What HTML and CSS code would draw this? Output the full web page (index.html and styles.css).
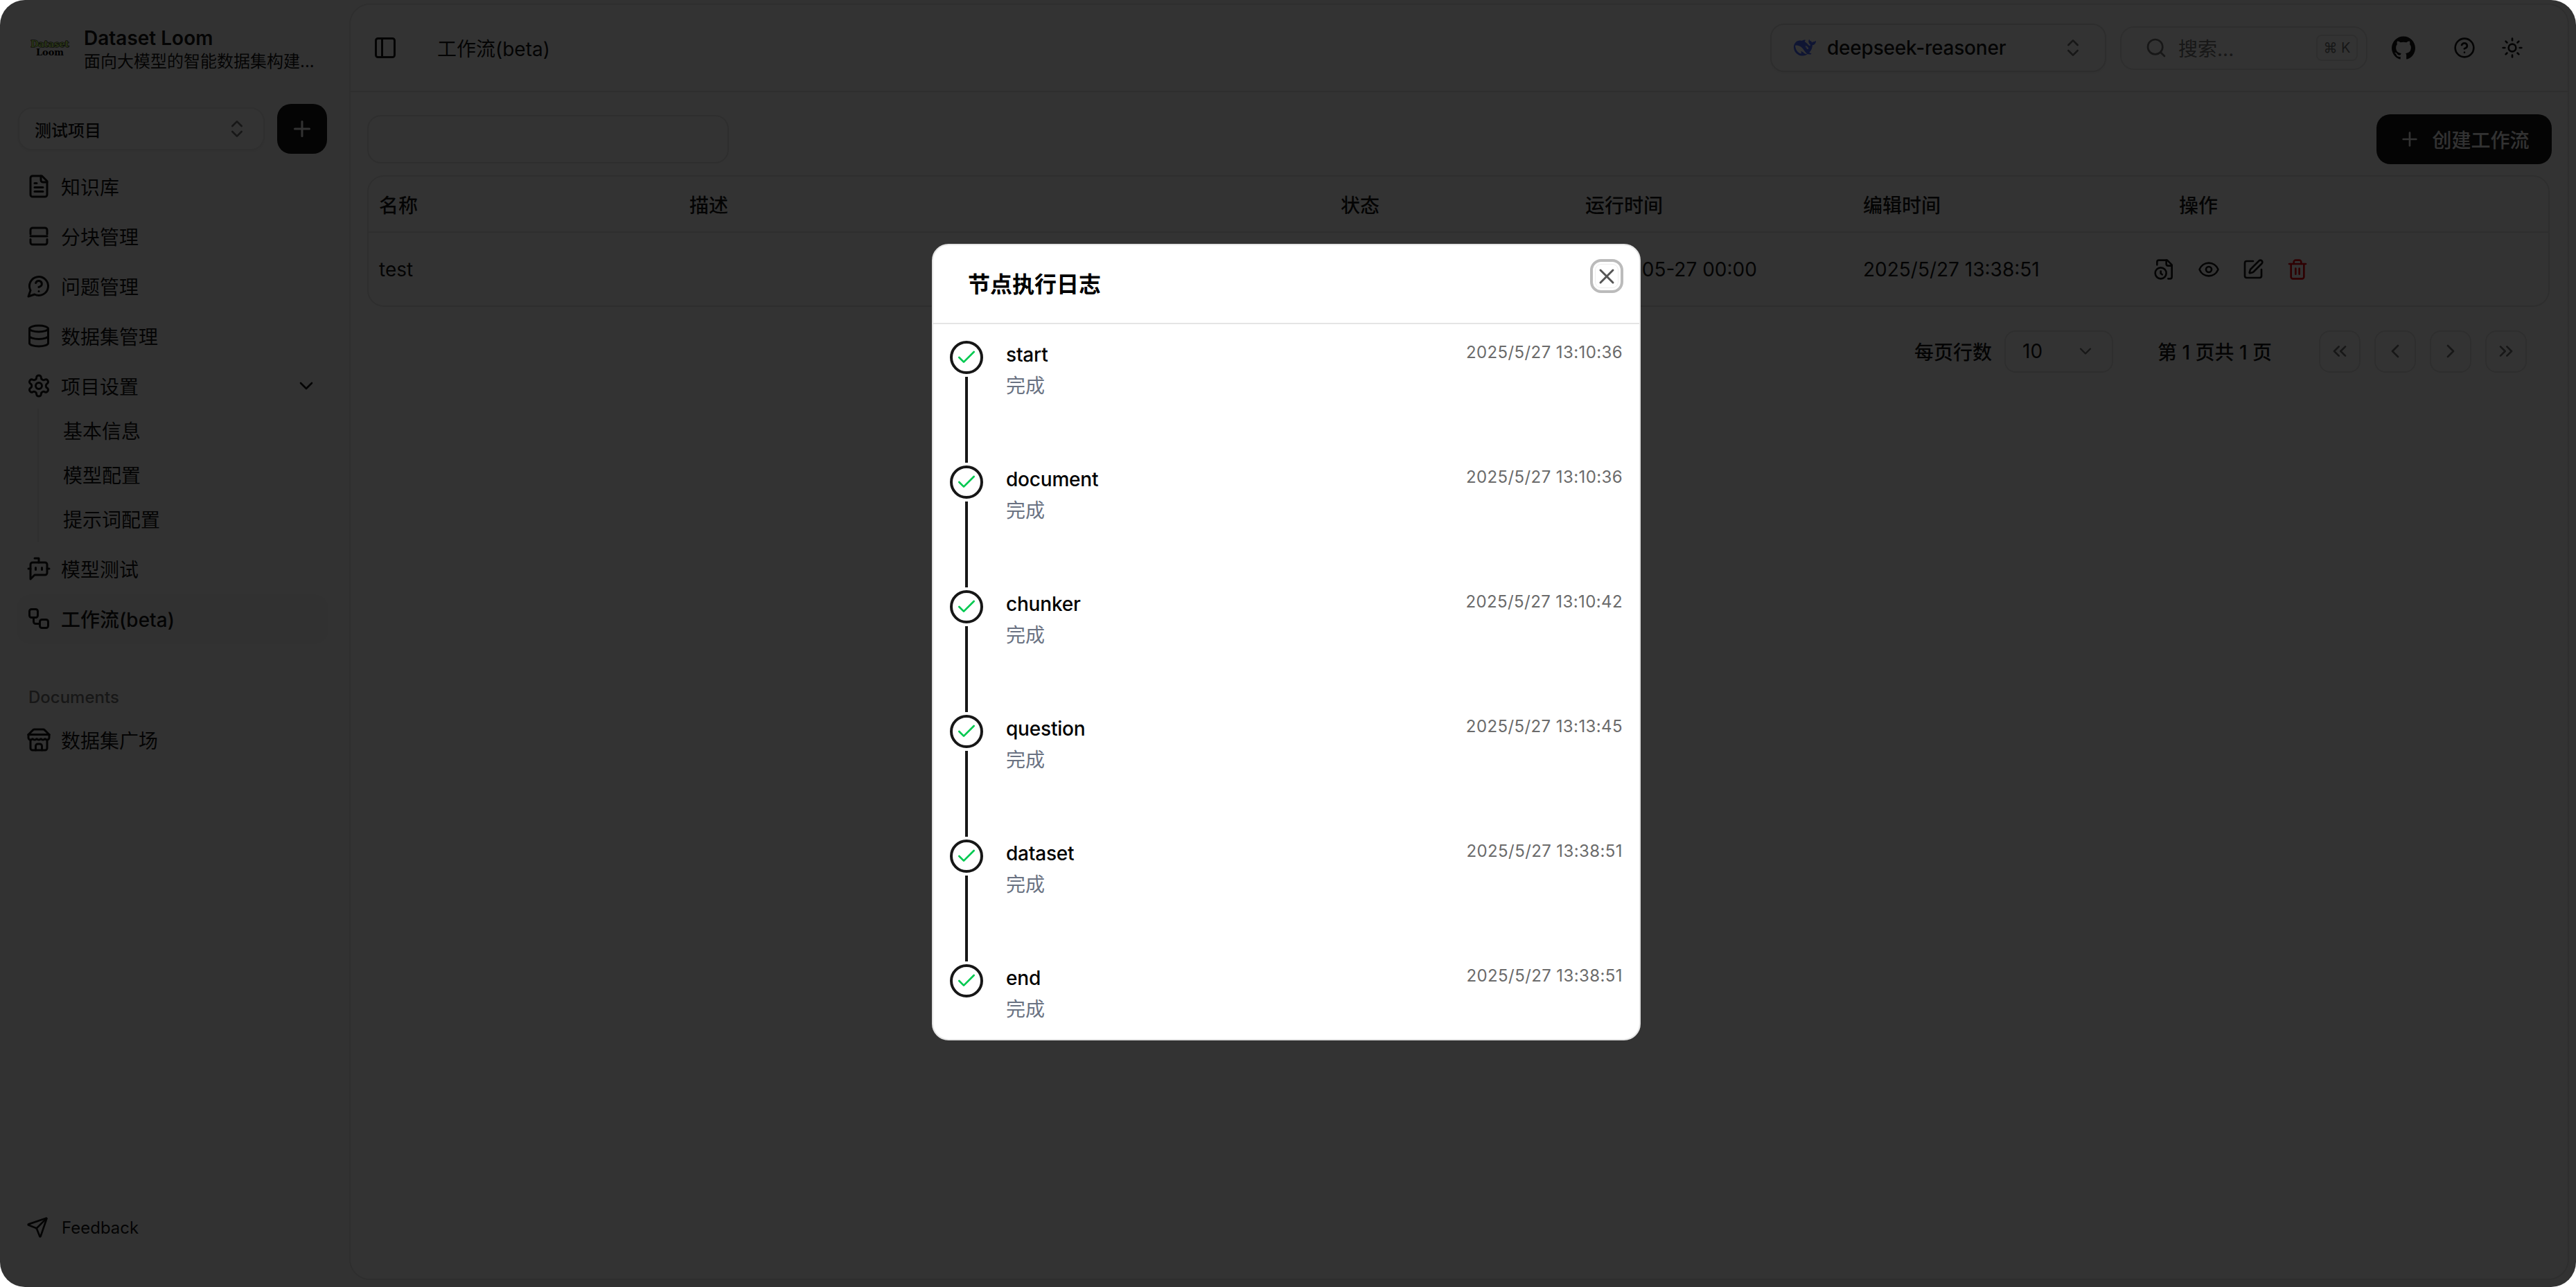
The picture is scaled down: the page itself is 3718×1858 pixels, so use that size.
FILE: index.html
```html
<!DOCTYPE html>
<html lang="zh-CN">
<head>
    <meta charset="UTF-8">
    <meta name="viewport" content="width=device-width, initial-scale=1.0">
    <title>Dataset Loom</title>
    <link rel="stylesheet" href="styles.css">
</head>
<body>

    <!-- Icon sprite -->
    <svg class="sprite" xmlns="http://www.w3.org/2000/svg">
        <symbol id="i-file" viewBox="0 0 24 24"><path d="M15 2H6a2 2 0 0 0-2 2v16a2 2 0 0 0 2 2h12a2 2 0 0 0 2-2V7Z"/><path d="M14 2v4a2 2 0 0 0 2 2h4"/><path d="M10 9H8"/><path d="M16 13H8"/><path d="M16 17H8"/></symbol>
        <symbol id="i-chunk" viewBox="0 0 24 24"><path d="M4 10V6a2 2 0 0 1 2-2h12a2 2 0 0 1 2 2v4"/><path d="M4 12h16"/><path d="M4 15v3a2 2 0 0 0 2 2h12a2 2 0 0 0 2-2v-3"/></symbol>
        <symbol id="i-question" viewBox="0 0 24 24"><path d="M7.9 20A9 9 0 1 0 4 16.1L2 22Z"/><path d="M9.09 9a3 3 0 0 1 5.83 1c0 2-3 3-3 3"/><path d="M12 17h.01"/></symbol>
        <symbol id="i-database" viewBox="0 0 24 24"><ellipse cx="12" cy="5" rx="9" ry="3"/><path d="M3 5V19A9 3 0 0 0 21 19V5"/><path d="M3 12A9 3 0 0 0 21 12"/></symbol>
        <symbol id="i-settings" viewBox="0 0 24 24"><path d="M12.22 2h-.44a2 2 0 0 0-2 2v.18a2 2 0 0 1-1 1.73l-.43.25a2 2 0 0 1-2 0l-.15-.08a2 2 0 0 0-2.73.73l-.22.38a2 2 0 0 0 .73 2.73l.15.1a2 2 0 0 1 1 1.72v.51a2 2 0 0 1-1 1.74l-.15.09a2 2 0 0 0-.73 2.73l.22.38a2 2 0 0 0 2.73.73l.15-.08a2 2 0 0 1 2 0l.43.25a2 2 0 0 1 1 1.73V20a2 2 0 0 0 2 2h.44a2 2 0 0 0 2-2v-.18a2 2 0 0 1 1-1.73l.43-.25a2 2 0 0 1 2 0l.15.08a2 2 0 0 0 2.73-.73l.22-.39a2 2 0 0 0-.73-2.73l-.15-.08a2 2 0 0 1-1-1.74v-.5a2 2 0 0 1 1-1.74l.15-.09a2 2 0 0 0 .73-2.73l-.22-.38a2 2 0 0 0-2.73-.73l-.15.08a2 2 0 0 1-2 0l-.43-.25a2 2 0 0 1-1-1.73V4a2 2 0 0 0-2-2z"/><circle cx="12" cy="12" r="3"/></symbol>
        <symbol id="i-bot" viewBox="0 0 24 24"><path d="M12 6V2H8"/><path d="m8 18-4 4V8a2 2 0 0 1 2-2h12a2 2 0 0 1 2 2v8a2 2 0 0 1-2 2Z"/><path d="M2 12h2"/><path d="M9 11v2"/><path d="M15 11v2"/><path d="M20 12h2"/></symbol>
        <symbol id="i-workflow" viewBox="0 0 24 24"><rect x="3" y="3" width="8" height="8" rx="2"/><path d="M7 11v4a2 2 0 0 0 2 2h4"/><rect x="13" y="13" width="8" height="8" rx="2"/></symbol>
        <symbol id="i-store" viewBox="0 0 24 24"><path d="m2 7 4.41-4.41A2 2 0 0 1 7.83 2h8.34a2 2 0 0 1 1.42.59L22 7"/><path d="M4 12v8a2 2 0 0 0 2 2h12a2 2 0 0 0 2-2v-8"/><path d="M15 22v-4a2 2 0 0 0-2-2h-2a2 2 0 0 0-2 2v4"/><path d="M2 7h20"/><path d="M22 7v3a2 2 0 0 1-2 2a2.7 2.7 0 0 1-1.59-.63.7.7 0 0 0-.82 0A2.7 2.7 0 0 1 16 12a2.7 2.7 0 0 1-1.59-.63.7.7 0 0 0-.82 0A2.7 2.7 0 0 1 12 12a2.7 2.7 0 0 1-1.59-.63.7.7 0 0 0-.82 0A2.7 2.7 0 0 1 8 12a2.7 2.7 0 0 1-1.59-.63.7.7 0 0 0-.82 0A2.7 2.7 0 0 1 4 12a2 2 0 0 1-2-2V7"/></symbol>
        <symbol id="i-send" viewBox="0 0 24 24"><path d="M14.536 21.686a.5.5 0 0 0 .937-.024l6.5-19a.496.496 0 0 0-.635-.635l-19 6.5a.5.5 0 0 0-.024.937l7.93 3.18a2 2 0 0 1 1.112 1.11z"/><path d="m21.854 2.147-10.94 10.939"/></symbol>
        <symbol id="i-updown" viewBox="0 0 24 24"><path d="m7 15 5 5 5-5"/><path d="m7 9 5-5 5 5"/></symbol>
        <symbol id="i-plus" viewBox="0 0 24 24"><path d="M5 12h14"/><path d="M12 5v14"/></symbol>
        <symbol id="i-down" viewBox="0 0 24 24"><path d="m6 9 6 6 6-6"/></symbol>
        <symbol id="i-panel" viewBox="0 0 24 24"><rect x="3" y="3" width="18" height="18" rx="2"/><path d="M9 3v18"/></symbol>
        <symbol id="i-search" viewBox="0 0 24 24"><path d="m21 21-4.34-4.34"/><circle cx="11" cy="11" r="8"/></symbol>
        <symbol id="i-help" viewBox="0 0 24 24"><circle cx="12" cy="12" r="10"/><path d="M9.09 9a3 3 0 0 1 5.83 1c0 2-3 3-3 3"/><path d="M12 17h.01"/></symbol>
        <symbol id="i-sun" viewBox="0 0 24 24"><circle cx="12" cy="12" r="4"/><path d="M12 2v2"/><path d="M12 20v2"/><path d="m4.93 4.93 1.41 1.41"/><path d="m17.66 17.66 1.41 1.41"/><path d="M2 12h2"/><path d="M20 12h2"/><path d="m6.34 17.66-1.41 1.41"/><path d="m19.07 4.93-1.41 1.41"/></symbol>
        <symbol id="i-fileclock" viewBox="0 0 24 24"><path d="M16 22h2a2 2 0 0 0 2-2V7l-5-5H6a2 2 0 0 0-2 2v3"/><path d="M14 2v4a2 2 0 0 0 2 2h4"/><circle cx="8" cy="16" r="6"/><path d="M9.5 17.5 8 16.25V14"/></symbol>
        <symbol id="i-eye" viewBox="0 0 24 24"><path d="M2.062 12.348a1 1 0 0 1 0-.696 10.75 10.75 0 0 1 19.876 0 1 1 0 0 1 0 .696 10.75 10.75 0 0 1-19.876 0"/><circle cx="12" cy="12" r="3"/></symbol>
        <symbol id="i-pen" viewBox="0 0 24 24"><path d="M12 3H5a2 2 0 0 0-2 2v14a2 2 0 0 0 2 2h14a2 2 0 0 0 2-2v-7"/><path d="M18.375 2.625a1 1 0 0 1 3 3l-9.013 9.014a2 2 0 0 1-.853.505l-2.873.84a.5.5 0 0 1-.62-.62l.84-2.873a2 2 0 0 1 .506-.852z"/></symbol>
        <symbol id="i-trash" viewBox="0 0 24 24"><path d="M3 6h18"/><path d="M19 6v14c0 1-1 2-2 2H7c-1 0-2-1-2-2V6"/><path d="M8 6V4c0-1 1-2 2-2h4c1 0 2 1 2 2v2"/><path d="M10 11v6"/><path d="M14 11v6"/></symbol>
        <symbol id="i-first" viewBox="0 0 24 24"><path d="m11 17-5-5 5-5"/><path d="m18 17-5-5 5-5"/></symbol>
        <symbol id="i-prev" viewBox="0 0 24 24"><path d="m15 18-6-6 6-6"/></symbol>
        <symbol id="i-next" viewBox="0 0 24 24"><path d="m9 18 6-6-6-6"/></symbol>
        <symbol id="i-last" viewBox="0 0 24 24"><path d="m6 17 5-5-5-5"/><path d="m13 17 5-5-5-5"/></symbol>
        <symbol id="i-x" viewBox="0 0 24 24"><path d="M18 6 6 18"/><path d="m6 6 12 12"/></symbol>
        <symbol id="i-check" viewBox="0 0 24 24"><path d="M20 6 9 17l-5-5"/></symbol>
    </svg>

    <div class="app">

        <!-- Sidebar -->
        <aside class="sidebar">
            <div class="brand">
                <div class="brand-logo"><span class="logo-top">Dataset</span><span class="logo-bottom">Loom</span></div>
                <div class="brand-text">
                    <div class="brand-name">Dataset Loom</div>
                    <div class="brand-desc">面向大模型的智能数据集构建...</div>
                </div>
            </div>

            <div class="project-row">
                <div class="project-select">
                    <span>测试项目</span>
                    <svg class="icon icon-sm muted"><use href="#i-updown"/></svg>
                </div>
                <button class="add-project"><svg class="icon"><use href="#i-plus"/></svg></button>
            </div>

            <nav class="nav">
                <a class="nav-item"><svg class="icon"><use href="#i-file"/></svg>知识库</a>
                <a class="nav-item"><svg class="icon"><use href="#i-chunk"/></svg>分块管理</a>
                <a class="nav-item"><svg class="icon"><use href="#i-question"/></svg>问题管理</a>
                <a class="nav-item"><svg class="icon"><use href="#i-database"/></svg>数据集管理</a>
                <a class="nav-item"><svg class="icon"><use href="#i-settings"/></svg>项目设置<svg class="icon nav-caret"><use href="#i-down"/></svg></a>
                <div class="sub-nav">
                    <a class="sub-item">基本信息</a>
                    <a class="sub-item">模型配置</a>
                    <a class="sub-item">提示词配置</a>
                </div>
                <a class="nav-item"><svg class="icon"><use href="#i-bot"/></svg>模型测试</a>
                <a class="nav-item active"><svg class="icon"><use href="#i-workflow"/></svg>工作流(beta)</a>
            </nav>

            <div class="nav-label">Documents</div>
            <a class="nav-item"><svg class="icon"><use href="#i-store"/></svg>数据集广场</a>

            <a class="feedback"><svg class="icon icon-feedback"><use href="#i-send"/></svg>Feedback</a>
        </aside>

        <!-- Main panel -->
        <main class="panel">
            <header class="topbar">
                <svg class="icon"><use href="#i-panel"/></svg>
                <span class="page-title">工作流(beta)</span>

                <div class="model-select">
                    <svg class="whale" viewBox="0 0 24 24"><path fill-rule="evenodd" d="M23.748 4.482c-.254-.124-.364.113-.512.234-.051.039-.094.09-.137.136-.372.397-.806.657-1.373.626-.829-.046-1.537.214-2.163.848-.133-.782-.575-1.248-1.247-1.548-.352-.156-.708-.311-.955-.65-.172-.241-.219-.51-.305-.774-.055-.16-.11-.323-.293-.35-.2-.031-.278.136-.356.276-.313.572-.434 1.202-.422 1.84.027 1.436.633 2.58 1.838 3.393.137.093.172.187.129.323-.082.28-.18.552-.266.833-.055.179-.137.217-.329.14a5.526 5.526 0 01-1.736-1.18c-.857-.828-1.631-1.742-2.597-2.458a11.365 11.365 0 00-.689-.471c-.985-.957.13-1.743.388-1.836.27-.098.093-.432-.779-.428-.872.004-1.67.295-2.687.684a3.055 3.055 0 01-.465.137 9.597 9.597 0 00-2.883-.102c-1.885.21-3.39 1.102-4.497 2.623C.082 8.606-.231 10.684.152 12.85c.403 2.284 1.569 4.175 3.36 5.653 1.858 1.533 3.997 2.284 6.438 2.14 1.482-.085 3.133-.284 4.994-1.860.47.234.962.327 1.78.397.63.059 1.236-.03 1.705-.128.735-.156.684-.837.419-.961-2.155-1.004-1.682-.595-2.113-.926 1.096-1.296 2.746-2.642 3.392-7.003.05-.347.007-.565 0-.845-.004-.17.035-.237.23-.256a4.173 4.173 0 001.545-.475c1.396-.763 1.960-2.015 2.093-3.517.02-.23-.004-.467-.247-.588zM11.581 18c-2.089-1.642-3.102-2.183-3.52-2.160-.392.024-.321.471-.235.763.09.288.207.486.371.739.114.167.192.416-.113.603-.673.416-1.842-.14-1.897-.167-1.361-.802-2.500-1.860-3.301-3.307-.774-1.393-1.224-2.887-1.298-4.482-.02-.386.093-.522.477-.592a4.696 4.696 0 011.529-.039c2.132.312 3.946 1.265 5.468 2.774.868.86 1.525 1.887 2.202 2.891.72 1.066 1.494 2.082 2.48 2.914.348.292.625.514.891.677-.802.09-2.14.11-3.054-.614zm1-6.44a.306.306 0 01.415-.287.302.302 0 01.2.288.306.306 0 01-.31.307.303.303 0 01-.304-.308zm3.110 1.596c-.2.081-.399.151-.59.16a1.245 1.245 0 01-.798-.254c-.274-.23-.47-.358-.552-.758a1.730 1.730 0 01.016-.588c.07-.327-.008-.537-.239-.727-.187-.156-.426-.199-.688-.199a.559.559 0 01-.254-.078c-.11-.054-.2-.19-.114-.358.028-.054.16-.186.192-.21.356-.202.767-.136 1.146.016.352.144.618.408 1.001.782.391.451.462.576.685.914.176.265.336.537.445.848.067.195-.019.354-.25.452z"/></svg>
                    <span class="model-name">deepseek-reasoner</span>
                    <svg class="icon icon-sm muted model-caret"><use href="#i-updown"/></svg>
                </div>

                <div class="search-box">
                    <svg class="icon muted"><use href="#i-search"/></svg>
                    <span class="search-text">搜索...</span>
                    <kbd class="kbd">⌘ K</kbd>
                </div>

                <svg class="github" viewBox="0 0 24 24"><path d="M12 .297c-6.630 0-12 5.373-12 12 0 5.303 3.438 9.800 8.205 11.385.6.113.82-.258.82-.577 0-.285-.01-1.040-.015-2.040-3.338.724-4.042-1.610-4.042-1.610C4.422 18.070 3.633 17.700 3.633 17.700c-1.087-.744.084-.729.084-.729 1.205.084 1.838 1.236 1.838 1.236 1.070 1.835 2.809 1.305 3.495.998.108-.776.417-1.305.76-1.605-2.665-.3-5.466-1.332-5.466-5.930 0-1.310.465-2.380 1.235-3.220-.135-.303-.54-1.523.105-3.176 0 0 1.005-.322 3.300 1.230.96-.267 1.980-.399 3-.405 1.020.006 2.040.138 3 .405 2.280-1.552 3.285-1.230 3.285-1.230.645 1.653.24 2.873.12 3.176.765.84 1.230 1.910 1.230 3.220 0 4.610-2.805 5.625-5.475 5.920.42.36.81 1.096.81 2.220 0 1.606-.015 2.896-.015 3.286 0 .315.21.69.825.57C20.565 22.092 24 17.592 24 12.297c0-6.627-5.373-12-12-12"/></svg>
                <svg class="icon top-help"><use href="#i-help"/></svg>
                <svg class="icon top-sun"><use href="#i-sun"/></svg>
            </header>

            <section class="content">
                <div class="toolbar">
                    <div class="filter-input"></div>
                    <button class="create-btn"><svg class="icon"><use href="#i-plus"/></svg>创建工作流</button>
                </div>

                <div class="table">
                    <div class="row row-head">
                        <div>名称</div>
                        <div>描述</div>
                        <div>状态</div>
                        <div>运行时间</div>
                        <div>编辑时间</div>
                        <div class="head-actions">操作</div>
                    </div>
                    <div class="row row-body">
                        <div>test</div>
                        <div></div>
                        <div></div>
                        <div>2025-05-27 00:00</div>
                        <div>2025/5/27 13:38:51</div>
                        <div class="actions">
                            <svg class="icon"><use href="#i-fileclock"/></svg>
                            <svg class="icon"><use href="#i-eye"/></svg>
                            <svg class="icon"><use href="#i-pen"/></svg>
                            <svg class="icon danger"><use href="#i-trash"/></svg>
                        </div>
                    </div>
                </div>

                <div class="pager">
                    <span class="pager-label">每页行数</span>
                    <div class="pager-select">10<svg class="icon pager-caret muted"><use href="#i-down"/></svg></div>
                    <span class="pager-info">第 1 页共 1 页</span>
                    <div class="pager-buttons">
                        <button class="page-btn"><svg class="icon icon-sm"><use href="#i-first"/></svg></button>
                        <button class="page-btn"><svg class="icon icon-sm"><use href="#i-prev"/></svg></button>
                        <button class="page-btn"><svg class="icon icon-sm"><use href="#i-next"/></svg></button>
                        <button class="page-btn"><svg class="icon icon-sm"><use href="#i-last"/></svg></button>
                    </div>
                </div>
            </section>
        </main>

        <!-- Dialog -->
        <div class="overlay">
            <div class="modal">
                <div class="modal-head">
                    <h2 class="modal-title">节点执行日志</h2>
                    <button class="modal-close"><svg class="icon"><use href="#i-x"/></svg></button>
                </div>
                <div class="timeline" id="timeline">
                    <div class="step">
                        <div class="step-mark"><span class="step-dot"><svg class="icon"><use href="#i-check"/></svg></span><span class="step-line"></span></div>
                        <div class="step-body"><div class="step-name">start</div><div class="step-status">完成</div></div>
                        <time class="step-time">2025/5/27 13:10:36</time>
                    </div>
                    <div class="step">
                        <div class="step-mark"><span class="step-dot"><svg class="icon"><use href="#i-check"/></svg></span><span class="step-line"></span></div>
                        <div class="step-body"><div class="step-name">document</div><div class="step-status">完成</div></div>
                        <time class="step-time">2025/5/27 13:10:36</time>
                    </div>
                    <div class="step">
                        <div class="step-mark"><span class="step-dot"><svg class="icon"><use href="#i-check"/></svg></span><span class="step-line"></span></div>
                        <div class="step-body"><div class="step-name">chunker</div><div class="step-status">完成</div></div>
                        <time class="step-time">2025/5/27 13:10:42</time>
                    </div>
                    <div class="step">
                        <div class="step-mark"><span class="step-dot"><svg class="icon"><use href="#i-check"/></svg></span><span class="step-line"></span></div>
                        <div class="step-body"><div class="step-name">question</div><div class="step-status">完成</div></div>
                        <time class="step-time">2025/5/27 13:13:45</time>
                    </div>
                    <div class="step">
                        <div class="step-mark"><span class="step-dot"><svg class="icon"><use href="#i-check"/></svg></span><span class="step-line"></span></div>
                        <div class="step-body"><div class="step-name">dataset</div><div class="step-status">完成</div></div>
                        <time class="step-time">2025/5/27 13:38:51</time>
                    </div>
                    <div class="step step-last">
                        <div class="step-mark"><span class="step-dot"><svg class="icon"><use href="#i-check"/></svg></span></div>
                        <div class="step-body"><div class="step-name">end</div><div class="step-status">完成</div></div>
                        <time class="step-time">2025/5/27 13:38:51</time>
                    </div>
                </div>
            </div>
        </div>

    </div>

</body>
</html>
```

FILE: styles.css
```css
* {
    box-sizing: border-box;
}
html, body {
    height: 100%;
}
body {
    margin: 0;
    background-color: #fff;
    color: #171717;
    font-family: Inter, "Noto Sans CJK SC", "DejaVu Sans", sans-serif;
    font-size: 28px;
}
button {
    font-family: inherit;
    cursor: pointer;
}
.sprite {
    display: none;
}
.icon {
    width: 36px;
    height: 36px;
    flex: none;
    fill: none;
    stroke: currentColor;
    stroke-width: 2;
    stroke-linecap: round;
    stroke-linejoin: round;
}
.icon-sm {
    width: 32px;
    height: 32px;
}
.muted {
    color: #737373;
}
.app {
    position: relative;
    display: flex;
    height: 100vh;
    border-radius: 36px;
    overflow: hidden;
    background-color: #fafafa;
}

/* Sidebar */
.sidebar {
    width: 504px;
    flex: none;
    display: flex;
    flex-direction: column;
}
.brand {
    height: 150px;
    padding: 0 0 6px 41px;
    display: flex;
    align-items: center;
}
.brand-logo {
    width: 62px;
    margin: 0 18px 4px 0;
    display: flex;
    flex-direction: column;
    align-items: center;
    font-family: "DejaVu Serif", serif;
    font-weight: 700;
    line-height: 12px;
}
.logo-top {
    font-size: 13px;
    color: #c8ff70;
    -webkit-text-stroke: 1px #000;
    paint-order: stroke fill;
}
.logo-bottom {
    font-size: 13px;
    color: #000;
}
.brand-name {
    font-weight: 600;
    line-height: 34px;
}
.brand-desc {
    font-size: 24px;
    line-height: 34px;
}
.project-row {
    height: 72px;
    padding-left: 26px;
    display: flex;
    align-items: center;
    gap: 18px;
}
.project-select {
    width: 356px;
    height: 62px;
    padding: 0 22px;
    display: flex;
    align-items: center;
    justify-content: space-between;
    font-size: 24px;
    font-weight: 500;
    background-color: #fff;
    border: 2px solid #e8e8e8;
    border-radius: 20px;
    box-shadow: 0 2px 4px rgba(0, 0, 0, 0.05);
}
.add-project {
    width: 72px;
    height: 72px;
    padding: 0;
    border: none;
    border-radius: 20px;
    background-color: #171717;
    color: #fafafa;
    display: flex;
    align-items: center;
    justify-content: center;
}
.nav {
    margin-top: 12px;
}
.nav-item {
    height: 72px;
    padding: 0 46px 2px 38px;
    display: flex;
    align-items: center;
    gap: 14px;
}
.nav-item.active {
    margin: 0 30px 0 24px;
    padding-left: 14px;
    font-weight: 500;
    background-color: #f5f5f5;
    border-radius: 20px;
}
.nav-caret {
    width: 32px;
    height: 32px;
    margin-left: auto;
}
.sub-nav {
    margin: -4px 0 4px 54px;
    border-left: 2px solid #e5e5e5;
}
.sub-item {
    height: 64px;
    padding: 0 0 2px 35px;
    display: flex;
    align-items: center;
}
.nav-label {
    height: 103px;
    padding: 61px 0 0 41px;
    font-size: 24px;
    font-weight: 500;
    color: #737373;
    line-height: 32px;
}
.feedback {
    height: 72px;
    margin-top: auto;
    margin-bottom: 50px;
    padding-left: 38px;
    display: flex;
    align-items: center;
    gap: 15px;
    font-size: 24px;
}
.icon-feedback {
    width: 32px;
    height: 32px;
    margin-right: 4px;
}

/* Main panel */
.panel {
    flex: 1;
    margin: 5px 10px 10px 0;
    background-color: #fff;
    border: 2px solid #e5e5e5;
    border-radius: 30px;
}
.topbar {
    height: 126px;
    padding: 0 64px 0 32px;
    display: flex;
    align-items: center;
    border-bottom: 2px solid #e5e5e5;
}
.page-title {
    margin-left: 57px;
}
.model-select {
    width: 485px;
    height: 70px;
    margin-left: auto;
    padding: 0 30px 0 32px;
    display: flex;
    align-items: center;
    font-weight: 500;
    border: 2px solid #e0e0e0;
    border-radius: 20px;
    box-shadow: 0 2px 4px rgba(0, 0, 0, 0.05);
}
.whale {
    width: 32px;
    height: 32px;
    flex: none;
    fill: #4d6bfe;
    margin-right: 16px;
}
.model-name {
    letter-spacing: -0.2px;
}
.model-caret {
    margin-left: auto;
}
.search-box {
    width: 357px;
    height: 63px;
    margin-left: 20px;
    padding: 0 12px 0 34px;
    display: flex;
    align-items: center;
    color: #737373;
    border: 2px solid #e5e5e5;
    border-radius: 20px;
}
.search-box .icon {
    width: 32px;
    height: 32px;
}
.search-text {
    margin-left: 16px;
}
.kbd {
    width: 60px;
    height: 38px;
    margin-left: auto;
    display: flex;
    align-items: center;
    justify-content: center;
    font-family: Inter, "DejaVu Sans", sans-serif;
    font-size: 20px;
    border: 2px solid #e5e5e5;
    border-radius: 8px;
}
.github {
    width: 34px;
    height: 34px;
    flex: none;
    margin-left: 35px;
    fill: #171717;
}
.top-help {
    width: 32px;
    height: 32px;
    margin-left: 55px;
}
.top-sun {
    width: 32px;
    height: 32px;
    margin-left: 37px;
}
.content {
    padding: 32px 26px 0 24px;
}
.toolbar {
    display: flex;
    align-items: center;
    justify-content: space-between;
}
.filter-input {
    width: 522px;
    height: 70px;
    border: 2px solid #e5e5e5;
    border-radius: 20px;
}
.create-btn {
    width: 253px;
    height: 72px;
    margin-right: -3px;
    padding: 0;
    display: flex;
    align-items: center;
    justify-content: center;
    gap: 16px;
    font-size: 28px;
    font-weight: 500;
    color: #fafafa;
    background-color: #171717;
    border: none;
    border-radius: 20px;
}
.create-btn .icon {
    width: 32px;
    height: 32px;
}

/* Table */
.table {
    margin-top: 16px;
    border: 2px solid #e5e5e5;
    border-radius: 24px;
}
.row {
    display: grid;
    grid-template-columns: 448px 940px 353px 401px 420px 1fr;
    align-items: center;
    padding-left: 15px;
}
.row-head {
    height: 81px;
    font-weight: 500;
    border-bottom: 2px solid #e5e5e5;
}
.row-body {
    height: 105px;
}
.head-actions {
    padding-left: 36px;
}
.actions {
    margin-left: -1px;
    display: flex;
    gap: 32px;
}
.actions .icon {
    width: 32px;
    height: 32px;
}
.danger {
    color: #e7000b;
}

/* Pagination */
.pager {
    height: 62px;
    margin-top: 33px;
    display: flex;
    align-items: center;
}
.pager-label {
    margin-left: 2233px;
    font-weight: 500;
}
.pager-select {
    width: 157px;
    height: 61px;
    margin-left: 18px;
    padding: 0 24px;
    display: flex;
    align-items: center;
    justify-content: space-between;
    border: 2px solid #e5e5e5;
    border-radius: 16px;
}
.pager-caret {
    width: 28px;
    height: 28px;
}
.pager-info {
    margin-left: 64px;
    font-weight: 500;
}
.pager-buttons {
    margin-left: 68px;
    display: flex;
    gap: 20px;
}
.page-btn {
    width: 60px;
    height: 61px;
    padding: 0;
    display: flex;
    align-items: center;
    justify-content: center;
    color: #737373;
    background-color: #fff;
    border: 2px solid #e5e5e5;
    border-radius: 16px;
}

/* Dialog */
.overlay {
    position: absolute;
    inset: 0;
    display: flex;
    align-items: center;
    justify-content: center;
    background-color: rgba(0, 0, 0, 0.8);
}
.modal {
    width: 1023px;
    height: 1150px;
    margin: 0 5px 4px 0;
    background-color: #fff;
    border: 2px solid #e5e5e5;
    border-radius: 24px;
    overflow: hidden;
}
.modal-head {
    position: relative;
    height: 114px;
    padding: 0 0 0 50px;
    display: flex;
    align-items: center;
    border-bottom: 2px solid #e5e5e5;
}
.modal-title {
    margin: 0 0 4px;
    font-size: 32px;
    font-weight: 700;
    color: #000;
}
.modal-close {
    position: absolute;
    top: 20px;
    right: 23px;
    width: 48px;
    height: 49px;
    padding: 0;
    display: flex;
    align-items: center;
    justify-content: center;
    color: #555;
    background-color: #fff;
    border: 4px solid #bbb;
    border-radius: 16px;
    box-shadow: inset 0 0 0 3px #fff, inset 0 0 0 4px #eee;
}
.modal-close .icon {
    width: 36px;
    height: 36px;
}
.timeline {
    padding: 24px 24px 0 24px;
}
.step {
    height: 180px;
    display: flex;
}
.step-mark {
    width: 48px;
    flex: none;
    display: flex;
    flex-direction: column;
    align-items: center;
}
.step-dot {
    width: 48px;
    height: 48px;
    flex: none;
    display: flex;
    align-items: center;
    justify-content: center;
    color: #00c950;
    border: 4px solid #171717;
    border-radius: 50%;
}
.step-dot .icon {
    width: 32px;
    height: 32px;
}
.step-line {
    width: 4px;
    height: 124px;
    margin-top: 4px;
    background-color: #171717;
}
.step-body {
    margin-left: 33px;
    flex: 1;
}
.step-name {
    font-weight: 500;
    line-height: 40px;
    letter-spacing: -0.2px;
    color: #000;
}
.step-status {
    margin-top: 5px;
    line-height: 40px;
    color: #6a7282;
}
.step-time {
    margin-top: 1px;
    font-size: 24px;
    line-height: 32px;
    letter-spacing: 0.4px;
    color: #6b6b6b;
}
```
